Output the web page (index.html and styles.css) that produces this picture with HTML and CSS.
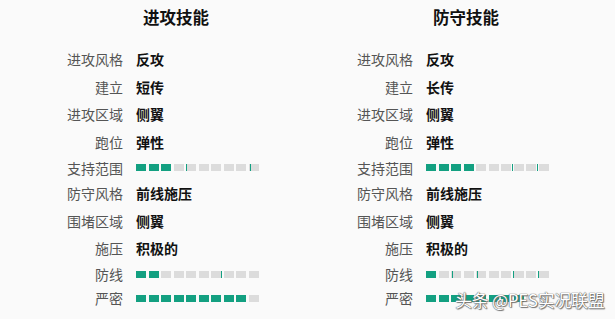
FILE: index.html
```html
<!DOCTYPE html>
<html lang="zh">
<head>
<meta charset="utf-8">
<link rel="stylesheet" href="styles.css">
</head>
<body>
<div class="page">
  <section class="col">
    <h2 class="title">进攻技能</h2>
    <div class="rows">
      <div class="row"><span class="lab">进攻风格</span><span class="val">反攻</span></div>
      <div class="row"><span class="lab">建立</span><span class="val">短传</span></div>
      <div class="row"><span class="lab">进攻区域</span><span class="val">侧翼</span></div>
      <div class="row"><span class="lab">跑位</span><span class="val">弹性</span></div>
      <div class="row bar-row"><span class="lab">支持范围</span>
        <div class="bar"><i class="on"></i><i class="on"></i><i class="on"></i><i></i><i></i><i></i><i></i><i></i><i></i><i></i>
          <b class="tick" style="left:50px"></b><b class="tick" style="left:114px"></b></div></div>
      <div class="row"><span class="lab">防守风格</span><span class="val">前线施压</span></div>
      <div class="row"><span class="lab">围堵区域</span><span class="val">侧翼</span></div>
      <div class="row"><span class="lab">施压</span><span class="val">积极的</span></div>
      <div class="row bar-row"><span class="lab">防线</span>
        <div class="bar"><i class="on"></i><i class="on"></i><i></i><i></i><i></i><i></i><i></i><i></i><i></i><i></i>
          <b class="tick" style="left:85px"></b></div></div>
      <div class="row bar-row"><span class="lab">严密</span>
        <div class="bar"><i class="on"></i><i class="on"></i><i class="on"></i><i class="on"></i><i class="on"></i><i class="on"></i><i class="on"></i><i class="on"></i><i class="on"></i><i></i></div></div>
    </div>
  </section>
  <section class="col">
    <h2 class="title">防守技能</h2>
    <div class="rows">
      <div class="row"><span class="lab">进攻风格</span><span class="val">反攻</span></div>
      <div class="row"><span class="lab">建立</span><span class="val">长传</span></div>
      <div class="row"><span class="lab">进攻区域</span><span class="val">侧翼</span></div>
      <div class="row"><span class="lab">跑位</span><span class="val">弹性</span></div>
      <div class="row bar-row"><span class="lab">支持范围</span>
        <div class="bar"><i class="on"></i><i class="on"></i><i class="on"></i><i class="on"></i><i></i><i></i><i></i><i></i><i></i><i></i>
          <b class="tick" style="left:86px"></b><b class="tick" style="left:111px"></b></div></div>
      <div class="row"><span class="lab">防守风格</span><span class="val">前线施压</span></div>
      <div class="row"><span class="lab">围堵区域</span><span class="val">侧翼</span></div>
      <div class="row"><span class="lab">施压</span><span class="val">积极的</span></div>
      <div class="row bar-row"><span class="lab">防线</span>
        <div class="bar"><i class="on"></i><i></i><i></i><i></i><i></i><i></i><i></i><i></i><i></i><i></i>
          <b class="tick" style="left:26px"></b><b class="tick" style="left:51px"></b><b class="tick" style="left:87px"></b><b class="tick" style="left:112px"></b></div></div>
      <div class="row bar-row"><span class="lab">严密</span>
        <div class="bar"><i class="on"></i><i class="on"></i><i class="on"></i><i class="on"></i><i class="on"></i><i class="on"></i><i class="on"></i><i class="on"></i><i></i><i></i></div></div>
    </div>
  </section>
  <div class="watermark">头条 @PES实况联盟</div>
</div>
</body>
</html>
```
FILE: styles.css
```css
html, body {
  margin: 0;
  padding: 0;
  background: #fafafa;
}
body {
  font-family: "Noto Sans CJK SC", "Noto Sans", sans-serif;
  color: #111;
}
.page {
  position: relative;
  display: flex;
  width: 615px;
  height: 319px;
  overflow: hidden;
}
.col {
  width: 290px;
  flex: none;
}
.title {
  margin: 6px 0 0 62px;
  height: 22px;
  line-height: 22px;
  font-size: 16.5px;
  font-weight: 700;
  text-align: center;
  color: #111;
}
.rows {
  margin-top: 17.5px;
  display: flex;
  flex-direction: column;
}
.row {
  display: flex;
  align-items: center;
  height: 27.5px;
  gap: 13px;
}
.row.bar-row {
  height: 24px;
}
.lab {
  width: 123px;
  text-align: right;
  font-size: 14px;
  color: #555;
  flex: none;
}
.val {
  font-size: 14px;
  font-weight: 700;
  color: #111;
}
.bar {
  position: relative;
  display: flex;
  gap: 2.5px;
}
.bar i {
  display: block;
  width: 10px;
  height: 7px;
  background: #dcdcdc;
}
.bar i.on {
  background: #13a081;
}
.tick {
  position: absolute;
  top: 0;
  width: 1px;
  height: 7px;
  background: #13a081;
}
.watermark {
  position: absolute;
  left: 455px;
  top: 288px;
  font-size: 17px;
  line-height: 24px;
  white-space: nowrap;
  color: #fff;
  letter-spacing: -0.3px;
  text-shadow: 0 0 1px #555, 0 0 1px #555, 1px 1px 1px #777;
}
```
